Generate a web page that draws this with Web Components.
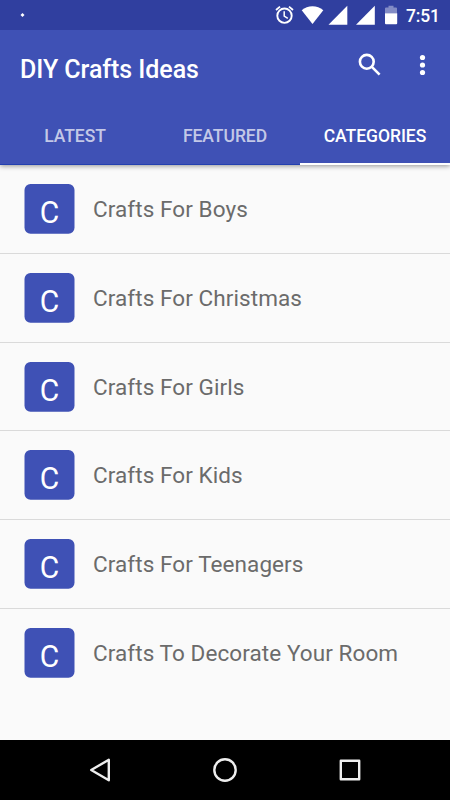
<!DOCTYPE html>
<html lang="en">
<head>
<meta charset="utf-8">
<title>DIY Crafts Ideas</title>
<style>
    html, body{
        margin: 0;
        height: 100%;
        overflow: hidden;
    }
    body{
        font-family: Roboto, "Liberation Sans", sans-serif;
        --primary: #3f51b5;
        --primary-dark: #303f9f;
    }
</style>
</head>
<body>
<crafts-app>
    <status-bar slot="top">7:51</status-bar>
    <app-toolbar slot="top">DIY Crafts Ideas</app-toolbar>
    <tab-strip slot="top">
        <tab-item>LATEST</tab-item>
        <tab-item>FEATURED</tab-item>
        <tab-item selected>CATEGORIES</tab-item>
    </tab-strip>
    <category-row letter="C">Crafts For Boys</category-row>
    <category-row letter="C">Crafts For Christmas</category-row>
    <category-row letter="C">Crafts For Girls</category-row>
    <category-row letter="C">Crafts For Kids</category-row>
    <category-row letter="C">Crafts For Teenagers</category-row>
    <category-row letter="C">Crafts To Decorate Your Room</category-row>
    <nav-bar slot="bottom"></nav-bar>
</crafts-app>

<script>
// every element clones its own markup into an open root
class BaseElement extends HTMLElement {
    constructor() {
        super();
        const template = document.createElement('template');
        template.innerHTML = this.constructor.markup;
        this.attachShadow({mode: 'open'});
        this.shadowRoot.appendChild(template.content.cloneNode(true));
    }
}

class CraftsApp extends BaseElement {
    static markup = `
<style>
    :host{
        display: flex;
        flex-direction: column;
        height: 100vh;
        background: #fafafa;
    }
    header{
        position: relative;
        flex: none;
        height: 165px;
        background: var(--primary);
        box-shadow: 0 1px 5px rgba(0, 0, 0, 0.42);
    }
    main{
        flex: 1;
        min-height: 0;
        overflow: hidden;
    }
</style>
<header><slot name="top"></slot></header>
<main><slot></slot></main>
<slot name="bottom"></slot>
`;
}

class StatusBar extends BaseElement {
    static markup = `
<style>
    :host{
        display: flex;
        justify-content: space-between;
        height: 30px;
        background: var(--primary-dark);
        color: #fff;
    }
    svg{
        display: block;
        flex: none;
    }
    .time{
        width: 44px;
        font-size: 17.5px;
        font-weight: 500;
        letter-spacing: -0.15px;
        line-height: 32px;
        white-space: nowrap;
    }
</style>
<svg width="40" height="30"><path d="M22.5 13l2 2-2 2-2-2z" fill="#fff"/></svg>
<svg width="136" height="30" viewBox="270 0 136 30" fill="#fff" style="margin-left:auto">
    <g fill="none" stroke="#fff">
        <circle cx="284.5" cy="15.7" r="7.2" stroke-width="1.9"/>
        <path d="M276 10l4-3.4M293 10l-4-3.4" stroke-width="1.8"/>
        <path d="M284.2 11.3v4.8l3.6 2.2" stroke-width="1.5"/>
    </g>
    <path d="M301.7 10.2C307.7 4.9 317.3 4.9 323.3 10.2L312.5 24z"/>
    <path d="M347.3 5.8v19h-18.8z"/>
    <path d="M374.8 5.8v19H356z"/>
    <path d="M385 13.3V8.6q0-1 1-1h2.5V5.8h5v1.8h2.5q1 0 1 1v4.7z" opacity=".4"/>
    <path d="M385 13.3h12.2v9.9q0 1-1 1H386q-1 0-1-1z"/>
</svg>
<div class="time"><slot></slot></div>
`;
}

class AppToolbar extends BaseElement {
    static markup = `
<style>
    :host{
        display: flex;
        height: 75px;
        color: #fff;
    }
    h1{
        flex: 1;
        margin: 0;
        padding-left: 20px;
        font-size: 25px;
        font-weight: 500;
        letter-spacing: -0.06px;
        line-height: 79px;
        white-space: nowrap;
    }
    svg{
        display: block;
        flex: none;
    }
</style>
<h1><slot></slot></h1>
<svg width="100" height="75" viewBox="350 30 100 75" fill="#fff">
    <g fill="none" stroke="#fff" stroke-width="2.6">
        <circle cx="366.8" cy="61.8" r="6.9"/>
        <path d="M371.6 66.6l8 8"/>
    </g>
    <circle cx="422.5" cy="57.5" r="2.6"/>
    <circle cx="422.5" cy="65" r="2.6"/>
    <circle cx="422.5" cy="72.5" r="2.6"/>
</svg>
`;
}

class TabStrip extends BaseElement {
    static markup = `
<style>
    :host{
        display: grid;
        grid-template-columns: repeat(3, 1fr);
        height: 60px;
    }
</style>
<slot></slot>
`;
}

class TabItem extends BaseElement {
    static markup = `
<style>
    :host{
        box-sizing: border-box;
        height: 60px;
        border-bottom: 1px solid #2440b0;
        color: rgba(255, 255, 255, 0.7);
        font-size: 17.5px;
        font-weight: 500;
        letter-spacing: -0.04px;
        line-height: 62px;
        text-align: center;
        white-space: nowrap;
    }
    :host([selected]){
        border-bottom: 2.5px solid #fff;
        color: #fff;
    }
</style>
<slot></slot>
`;
}

class CategoryRow extends BaseElement {
    static markup = `
<style>
    :host{
        display: flex;
        box-sizing: border-box;
        height: 88.75px;
        padding: 19px 0 0 24px;
        border-bottom: 1px solid #dadada;
    }
    :host(:last-of-type){
        border-bottom: 0;
    }
    svg{
        display: block;
        flex: none;
        width: 51px;
        height: 50px;
    }
    rect{
        fill: var(--primary);
    }
    text{
        fill: #fff;
        font-size: 31.5px;
        text-anchor: middle;
    }
    .name{
        padding-left: 18px;
        color: #6b6b6b;
        font-size: 22.5px;
        letter-spacing: 0.08px;
        line-height: 51px;
        white-space: nowrap;
    }
</style>
<svg viewBox="0 0 51 50">
    <rect x=".5" width="50" height="49.8" rx="6"/>
    <text transform="translate(25.6 38.9) scale(.95 1)"></text>
</svg>
<div class="name"><slot></slot></div>
`;

    connectedCallback() {
        this.shadowRoot.querySelector('text').textContent = this.getAttribute('letter');
    }
}

class NavBar extends BaseElement {
    static markup = `
<style>
    :host{
        flex: none;
        height: 60px;
        background: #000;
    }
    svg{
        display: block;
    }
</style>
<svg width="450" height="60" viewBox="0 740 450 60" fill="none" stroke="#eee" stroke-width="2.4" stroke-linejoin="round">
    <path d="M108.8 759.8v20.4L91.2 770z"/>
    <circle cx="225" cy="770" r="10.7"/>
    <rect x="340.8" y="760.8" width="18.4" height="18.4"/>
</svg>
`;
}

window.customElements.define('crafts-app', CraftsApp);
window.customElements.define('status-bar', StatusBar);
window.customElements.define('app-toolbar', AppToolbar);
window.customElements.define('tab-strip', TabStrip);
window.customElements.define('tab-item', TabItem);
window.customElements.define('category-row', CategoryRow);
window.customElements.define('nav-bar', NavBar);
</script>
</body>
</html>
